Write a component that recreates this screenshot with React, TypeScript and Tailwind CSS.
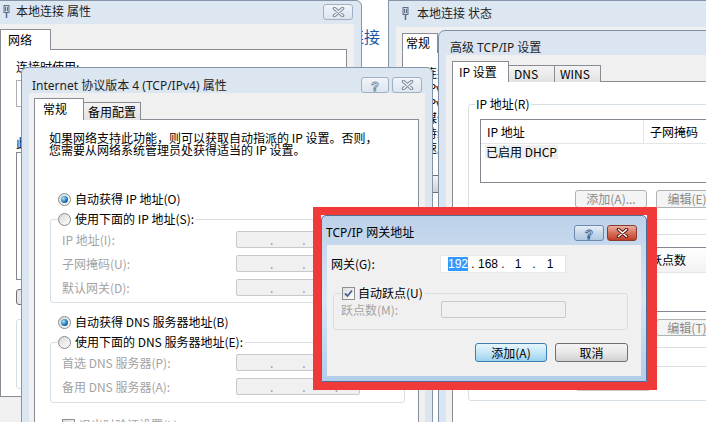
import React from "react";

const cjk = "font-['Noto_Sans_CJK_SC','Noto_Sans',sans-serif]";
const titleFont = "font-['Noto_Sans','Noto_Sans_CJK_SC',sans-serif]";

function XGlyph({ active }: { active?: boolean }) {
    return (
        <svg width="13" height="10" viewBox="0 0 13 10">
            <path d="M2.5 1.5 L10.5 8.5 M10.5 1.5 L2.5 8.5" stroke={active ? "#5e1a0f" : "#7f8b99"} strokeWidth="3.6" strokeLinecap="round" />
            <path d="M2.5 1.5 L10.5 8.5 M10.5 1.5 L2.5 8.5" stroke={active ? "#ffffff" : "#f3f6fa"} strokeWidth="1.5" strokeLinecap="round" />
        </svg>
    );
}

function HelpGlyph({ active }: { active?: boolean }) {
    return (
        <svg width="10" height="13" viewBox="0 0 10 13">
            <text x="5" y="11.5" textAnchor="middle" fontSize="13" fontWeight="bold" fontFamily="Liberation Sans" fill="#ffffff" stroke={active ? "#3f5f86" : "#7f8b99"} strokeWidth="0.9">
                ?
            </text>
        </svg>
    );
}

function CapBtn({ kind, active }: { kind: "help" | "close"; active?: boolean }) {
    if (kind === "close" && active) {
        return (
            <div className="flex items-center justify-center w-[30px] h-[16px] rounded-[3px] border border-[#8b3b2b] bg-gradient-to-b from-[#eab0a3] via-[#d6705b] to-[#c13c27]">
                <XGlyph active />
            </div>
        );
    }
    if (kind === "help" && active) {
        return (
            <div className="flex items-center justify-center w-[30px] h-[16px] rounded-[3px] border border-[#6d89ae] bg-gradient-to-b from-[#e6eef8] via-[#c8d8eb] to-[#b1c8e2]">
                <HelpGlyph active />
            </div>
        );
    }
    return (
        <div
            className={
                kind === "help"
                    ? "flex items-center justify-center w-[28px] h-[16px] rounded-[3px] border border-[#9fb0c4] bg-gradient-to-b from-[#f2f5f9] to-[#dce4ee]"
                    : "flex items-center justify-center w-[30px] h-[16px] rounded-[3px] border border-[#9fb0c4] bg-gradient-to-b from-[#f2f5f9] to-[#dce4ee]"
            }
        >
            {kind === "help" ? <HelpGlyph /> : <XGlyph />}
        </div>
    );
}

function Radio({ on }: { on?: boolean }) {
    return (
        <span className="inline-flex items-center justify-center w-[13px] h-[13px] rounded-full border border-[#8a8a8a] bg-gradient-to-br from-[#d8d8d8] to-[#ffffff] shrink-0">
            {on && <span className="w-[7px] h-[7px] rounded-full bg-[radial-gradient(circle_at_35%_35%,#9fe6ff,#1c6fae_60%,#0b3a63)]" />}
        </span>
    );
}

function Check({ on }: { on?: boolean }) {
    return (
        <span className="inline-flex items-center justify-center w-[13px] h-[13px] border border-[#8e8f8f] bg-gradient-to-br from-[#dcdcdc] to-[#ffffff] shrink-0">
            {on && (
                <svg width="9" height="9" viewBox="0 0 9 9">
                    <path d="M1 4.5 L3.5 7 L8 1.5" stroke="#4a5f97" strokeWidth="1.8" fill="none" />
                </svg>
            )}
        </span>
    );
}

function Btn({ children, kind, className }: { children: React.ReactNode; kind: "def" | "norm" | "off"; className: string }) {
    const look =
        kind === "def"
            ? "border-[#3c7fb1] bg-gradient-to-b from-[#e6f5fc] via-[#c6e6f7] to-[#9ad2ef] text-black"
            : kind === "norm"
            ? "border-[#707070] bg-gradient-to-b from-[#f4f4f4] via-[#e8e8e8] to-[#d0d0d0] text-black"
            : "border-[#adb2b5] bg-[#f4f4f4] text-[#8a8a8a]";
    return <div className={`flex items-center justify-center rounded-[3px] border ${look} ${className}`}>{children}</div>;
}

function IpDots() {
    return (
        <div className="flex items-center h-[17px] w-[124px] rounded-[2px] border border-[#c9c9c9] bg-[#f0f0f0] pl-[33px] gap-[29px] text-[#9a9a9a]">
            <span>.</span>
            <span>.</span>
            <span>.</span>
        </div>
    );
}

function NetIcon() {
    return (
        <svg width="7" height="13" viewBox="0 0 7 13">
            <rect x="1" y="0.5" width="5" height="7" fill="#c9d6e4" stroke="#5f7086" />
            <line x1="2.5" y1="2" x2="2.5" y2="6" stroke="#5f7086" />
            <line x1="4.5" y1="2" x2="4.5" y2="6" stroke="#5f7086" />
            <line x1="3.5" y1="8" x2="3.5" y2="13" stroke="#4a6fa0" strokeWidth="1.5" />
        </svg>
    );
}

export default function App() {
    return (
        <div className={`relative w-[706px] h-[422px] overflow-hidden bg-white text-[12px] leading-[14px] text-black ${cjk}`}>
            {/* window far behind */}
            <div className="absolute left-[348px] top-[27px] text-[16px] leading-[18px] text-[#1d539f]">连接</div>

            {/* 本地连接 属性 */}
            <div className="absolute left-[-8px] top-0 w-[370px] h-[440px] rounded-t-[6px] border border-[#8596ab] bg-[#dde7f2] flex flex-col">
                <div className="h-[23px] flex items-start pt-[4px] pl-[10px] pr-[8px]">
                    <NetIcon />
                    <span className={`ml-[6px] ${titleFont} text-[#1e1e1e]`}>本地连接 属性</span>
                    <div className="ml-auto -mt-[1px]">
                        <CapBtn kind="close" />
                    </div>
                </div>
                <div className="flex-1 ml-[7px] mr-[7px] bg-[#f0f0f0] pt-[5px] pr-[7px]">
                    <div className="flex items-end h-[21px]">
                        <div className="relative z-10 w-[51px] h-[21px] border border-b-0 border-[#898c95] bg-white pl-[7px] pt-[3px]">网络</div>
                    </div>
                    <div className="-mt-[1px] h-[348px] border border-[#898c95] bg-white pl-[15px] pt-[10px]">
                        <div>连接时使用:</div>
                        <div className="mt-[6px] h-[27px] w-[300px] border border-[#abadb3] bg-white" />
                        <div className="mt-[29px]">此连接使用下列项目(O):</div>
                        <div className="mt-[2px] h-[128px] w-[300px] border border-[#828790] bg-white" />
                        <div className="mt-[9px] h-[16px] w-[80px] rounded-[3px] border border-[#707070] bg-[#e8e8e8]" />
                        <div className="mt-[14px] h-[70px] w-[300px] rounded-[3px] border border-[#d5dfe5]" />
                    </div>
                </div>
            </div>

            {/* 本地连接 状态 */}
            <div className="absolute left-[388px] top-0 w-[330px] h-[440px] border border-[#8596ab] bg-[#dde7f2] flex flex-col">
                <div className="h-[26px] flex items-start pt-[6px] pl-[13px]">
                    <NetIcon />
                    <span className={`ml-[8px] ${titleFont} text-[#1e1e1e]`}>本地连接 状态</span>
                </div>
                <div className="flex-1 ml-[7px] bg-[#f0f0f0] pt-[6px] pl-[6px]">
                    <div className="flex items-end h-[20px]">
                        <div className="relative z-10 w-[36px] h-[20px] border border-b-0 border-[#898c95] bg-white pl-[3px] pt-[2px]">常规</div>
                    </div>
                    <div className="-mt-[1px] h-[380px] border border-[#898c95] bg-white pl-[22px] pt-[12px] leading-[15px]">
                        <div>连接</div>
                        <div>IPv4 连接:</div>
                        <div>IPv6 连接:</div>
                        <div>媒体状态:</div>
                        <div>持续时间:</div>
                        <div>速度:</div>
                        <div className="mt-[20px] w-[80px] h-[18px] rounded-[3px] border border-[#707070] bg-gradient-to-b from-[#f4f4f4] to-[#d0d0d0]" />
                    </div>
                </div>
            </div>

            {/* 高级 TCP/IP 设置 */}
            <div className="absolute left-[438px] top-[30px] w-[290px] h-[410px] rounded-tl-[7px] border border-[#7c8fa7] bg-[#dbe5f1] flex flex-col">
                <div className={`h-[27px] pt-[10px] pl-[11px] ${titleFont} text-[#1e1e1e]`}>高级 TCP/IP 设置</div>
                <div className="flex-1 ml-[7px] bg-[#f0f0f0] pt-[6px] pl-[6px]">
                    <div className="flex items-end h-[21px]">
                        <div className="relative z-10 w-[57px] h-[21px] border border-b-0 border-[#898c95] bg-white pl-[6px] pt-[3px]">IP 设置</div>
                        <div className="w-[46px] h-[17px] border border-b-0 border-l-0 border-[#898c95] bg-gradient-to-b from-[#f4f4f4] to-[#e2e2e2] pl-[5px] pt-[1px]">DNS</div>
                        <div className="w-[46px] h-[17px] border border-b-0 border-l-0 border-[#898c95] bg-gradient-to-b from-[#f4f4f4] to-[#e2e2e2] pl-[5px] pt-[1px]">WINS</div>
                    </div>
                    <div className="-mt-[1px] h-[360px] border border-[#898c95] bg-white pl-[15px] pt-[15px]">
                        <fieldset className="w-[260px] rounded-[3px] border border-[#d5dfe5] pb-[11px]">
                            <legend className="ml-[6px] px-[1px]">IP 地址(R)</legend>
                            <div className="ml-[11px] mt-[8px] w-[250px] h-[64px] border border-[#828790] bg-white">
                                <div className="flex h-[24px] border-b border-[#e5e5e5]">
                                    <div className="w-[163px] pl-[6px] border-r border-[#e5e5e5] flex items-center">IP 地址</div>
                                    <div className="pl-[6px] flex items-center">子网掩码</div>
                                </div>
                                <div className="mt-[1px] ml-[4px] inline-block bg-[#efefef] px-[1px]">已启用 DHCP</div>
                            </div>
                            <div className="ml-[106px] mt-[7px] flex gap-[9px]">
                                <Btn kind="off" className="w-[72px] h-[18px]">添加(A)...</Btn>
                                <Btn kind="off" className="w-[72px] h-[18px]">编辑(E)...</Btn>
                            </div>
                        </fieldset>
                        <fieldset className="mt-[7px] w-[260px] rounded-[3px] border border-[#d5dfe5] pb-[11px]">
                            <legend className="ml-[6px] px-[1px]">默认网关(F):</legend>
                            <div className="ml-[11px] mt-[6px] w-[250px] h-[65px] border border-[#828790] bg-white">
                                <div className="flex h-[25px] border-b border-[#e5e5e5] bg-gradient-to-b from-white to-[#f2f2f2]">
                                    <div className="w-[163px] pl-[6px] border-r border-[#e5e5e5] flex items-center">网关</div>
                                    <div className="pl-[6px] flex items-center">跃点数</div>
                                </div>
                            </div>
                            <div className="ml-[106px] mt-[7px] flex gap-[9px]">
                                <Btn kind="off" className="w-[72px] h-[17px]">添加(D)...</Btn>
                                <Btn kind="off" className="w-[72px] h-[17px]">编辑(T)...</Btn>
                            </div>
                        </fieldset>
                        <fieldset className="mt-[11px] w-[260px] rounded-[3px] border border-[#d5dfe5] pb-[9px]">
                            <legend className="ml-[6px] pr-[2px]">
                                <span className="flex items-center gap-[3px]">
                                    <Check on />
                                    <span>自动跃点(U)</span>
                                </span>
                            </legend>
                            <div className="pl-[11px] flex items-center h-[18px] text-[#9a9a9a]">
                                <span className="w-[96px]">接口跃点数(N):</span>
                                <div className="w-[74px] h-[18px] rounded-[2px] border border-[#c9c9c9] bg-[#f0f0f0]" />
                            </div>
                        </fieldset>
                    </div>
                </div>
            </div>

            {/* Internet 协议版本 4 (TCP/IPv4) 属性 */}
            <div className="absolute left-[21px] top-[67px] w-[412px] h-[370px] rounded-t-[6px] border border-[#8596ab] bg-[#dce6f1] flex flex-col">
                <div className="h-[29px] flex items-start pt-[11px] pl-[10px] pr-[10px]">
                    <span className={`${titleFont} text-[#1e1e1e]`}>Internet 协议版本 4 (TCP/IPv4) 属性</span>
                    <div className="ml-auto -mt-[2px] flex gap-[3px]">
                        <CapBtn kind="help" />
                        <CapBtn kind="close" />
                    </div>
                </div>
                <div className="flex-1 ml-[7px] mr-[7px] bg-[#f0f0f0] pt-[5px] pl-[5px] pr-[6px]">
                    <div className="flex items-end h-[22px]">
                        <div className="relative z-10 w-[50px] h-[22px] border border-b-0 border-[#898c95] bg-white pl-[8px] pt-[3px]">常规</div>
                        <div className="w-[57px] h-[18px] border border-b-0 border-l-0 border-[#898c95] bg-gradient-to-b from-[#f4f4f4] to-[#e2e2e2] pl-[4px] pt-[2px]">备用配置</div>
                    </div>
                    <div className="-mt-[1px] h-[320px] border border-[#898c95] bg-white">
                        <p className="pl-[14px] pt-[12px] leading-[12px]">
                            如果网络支持此功能，则可以获取自动指派的 IP 设置。否则，
                            <br />
                            您需要从网络系统管理员处获得适当的 IP 设置。
                        </p>
                        <div className="mt-[36px] ml-[23px] flex items-center gap-[4px] h-[14px]">
                            <Radio on />
                            <span>自动获得 IP 地址(O)</span>
                        </div>
                        <fieldset className="mt-[6px] ml-[15px] w-[355px] rounded-[3px] border border-[#d5dfe5] pb-[6px]">
                            <legend className="ml-[7px] pr-[2px]">
                                <span className="flex items-center gap-[4px] h-[14px]">
                                    <Radio />
                                    <span>使用下面的 IP 地址(S):</span>
                                </span>
                            </legend>
                            <div className="mt-[5px] flex flex-col gap-[7px] pl-[11px] text-[#a3a3a3]">
                                <div className="flex items-center h-[17px]">
                                    <span className="w-[174px]">IP 地址(I):</span>
                                    <IpDots />
                                </div>
                                <div className="flex items-center h-[17px]">
                                    <span className="w-[174px]">子网掩码(U):</span>
                                    <IpDots />
                                </div>
                                <div className="flex items-center h-[17px]">
                                    <span className="w-[174px]">默认网关(D):</span>
                                    <IpDots />
                                </div>
                            </div>
                        </fieldset>
                        <div className="mt-[12px] ml-[23px] flex items-center gap-[4px] h-[14px]">
                            <Radio on />
                            <span>自动获得 DNS 服务器地址(B)</span>
                        </div>
                        <fieldset className="mt-[6px] ml-[15px] w-[355px] rounded-[3px] border border-[#d5dfe5] pb-[7px]">
                            <legend className="ml-[7px] pr-[2px]">
                                <span className="flex items-center gap-[4px] h-[14px]">
                                    <Radio />
                                    <span>使用下面的 DNS 服务器地址(E):</span>
                                </span>
                            </legend>
                            <div className="mt-[5px] flex flex-col gap-[7px] pl-[11px] text-[#a3a3a3]">
                                <div className="flex items-center h-[17px]">
                                    <span className="w-[174px]">首选 DNS 服务器(P):</span>
                                    <IpDots />
                                </div>
                                <div className="flex items-center h-[17px]">
                                    <span className="w-[174px]">备用 DNS 服务器(A):</span>
                                    <IpDots />
                                </div>
                            </div>
                        </fieldset>
                        <div className="mt-[15px] ml-[27px] flex items-center gap-[4px] text-[#a3a3a3]">
                            <Check />
                            <span>退出时验证设置(L)</span>
                        </div>
                    </div>
                </div>
            </div>

            {/* TCP/IP 网关地址, marked with a red frame */}
            <div className="absolute left-[313px] top-[207px] w-[344px] h-[183px] border-t-[8px] border-l-[8px] border-b-[8px] border-r-[10px] border-[#f03a3a]">
                <div className="w-full h-full rounded-t-[5px] border border-[#4f6d90] bg-gradient-to-b from-[#bcd1ea] via-[#d9e6f3] to-[#b1cdeb] flex flex-col">
                    <div className="h-[29px] flex items-start pt-[10px] pl-[4px] pr-[9px]">
                        <span className={`${titleFont} text-black`}>TCP/IP 网关地址</span>
                        <div className="ml-auto -mt-[1px] flex gap-[3px]">
                            <CapBtn kind="help" active />
                            <CapBtn kind="close" active />
                        </div>
                    </div>
                    <div className="flex-1 ml-[5px] mr-[5px] mb-[5px] bg-[#f0f0f0] pt-[10px]">
                        <div className="flex items-center h-[18px] pl-[4px]">
                            <span className="w-[109px]">网关(G):</span>
                            <div className="flex items-center h-[18px] w-[126px] border border-[#e3e9ef] bg-white pl-[7px] font-['Liberation_Sans',sans-serif]">
                                <span className="w-[20px] text-center bg-[#3399ff] text-white">192</span>
                                <span className="w-[10px] text-center">.</span>
                                <span className="w-[20px] text-center">168</span>
                                <span className="w-[10px] text-center">.</span>
                                <span className="w-[20px] text-center">1</span>
                                <span className="w-[12px] text-center">.</span>
                                <span className="w-[20px] text-center">1</span>
                            </div>
                        </div>
                        <fieldset className="mt-[13px] ml-[6px] w-[295px] rounded-[3px] border border-[#d5dfe5] pb-[11px]">
                            <legend className="ml-[8px] pr-[2px]">
                                <span className="flex items-center gap-[3px] h-[14px]">
                                    <Check on />
                                    <span>自动跃点(U)</span>
                                </span>
                            </legend>
                            <div className="mt-[1px] flex items-center h-[17px] pl-[7px] text-[#a3a3a3]">
                                <span className="w-[100px]">跃点数(M):</span>
                                <div className="w-[125px] h-[17px] rounded-[2px] border border-[#c9c9c9] bg-[#f0f0f0]" />
                            </div>
                        </fieldset>
                        <div className="mt-[13px] flex justify-end gap-[8px] pr-[13px]">
                            <Btn kind="def" className="w-[72px] h-[19px]">添加(A)</Btn>
                            <Btn kind="norm" className="w-[73px] h-[19px]">取消</Btn>
                        </div>
                    </div>
                </div>
            </div>
        </div>
    );
}
